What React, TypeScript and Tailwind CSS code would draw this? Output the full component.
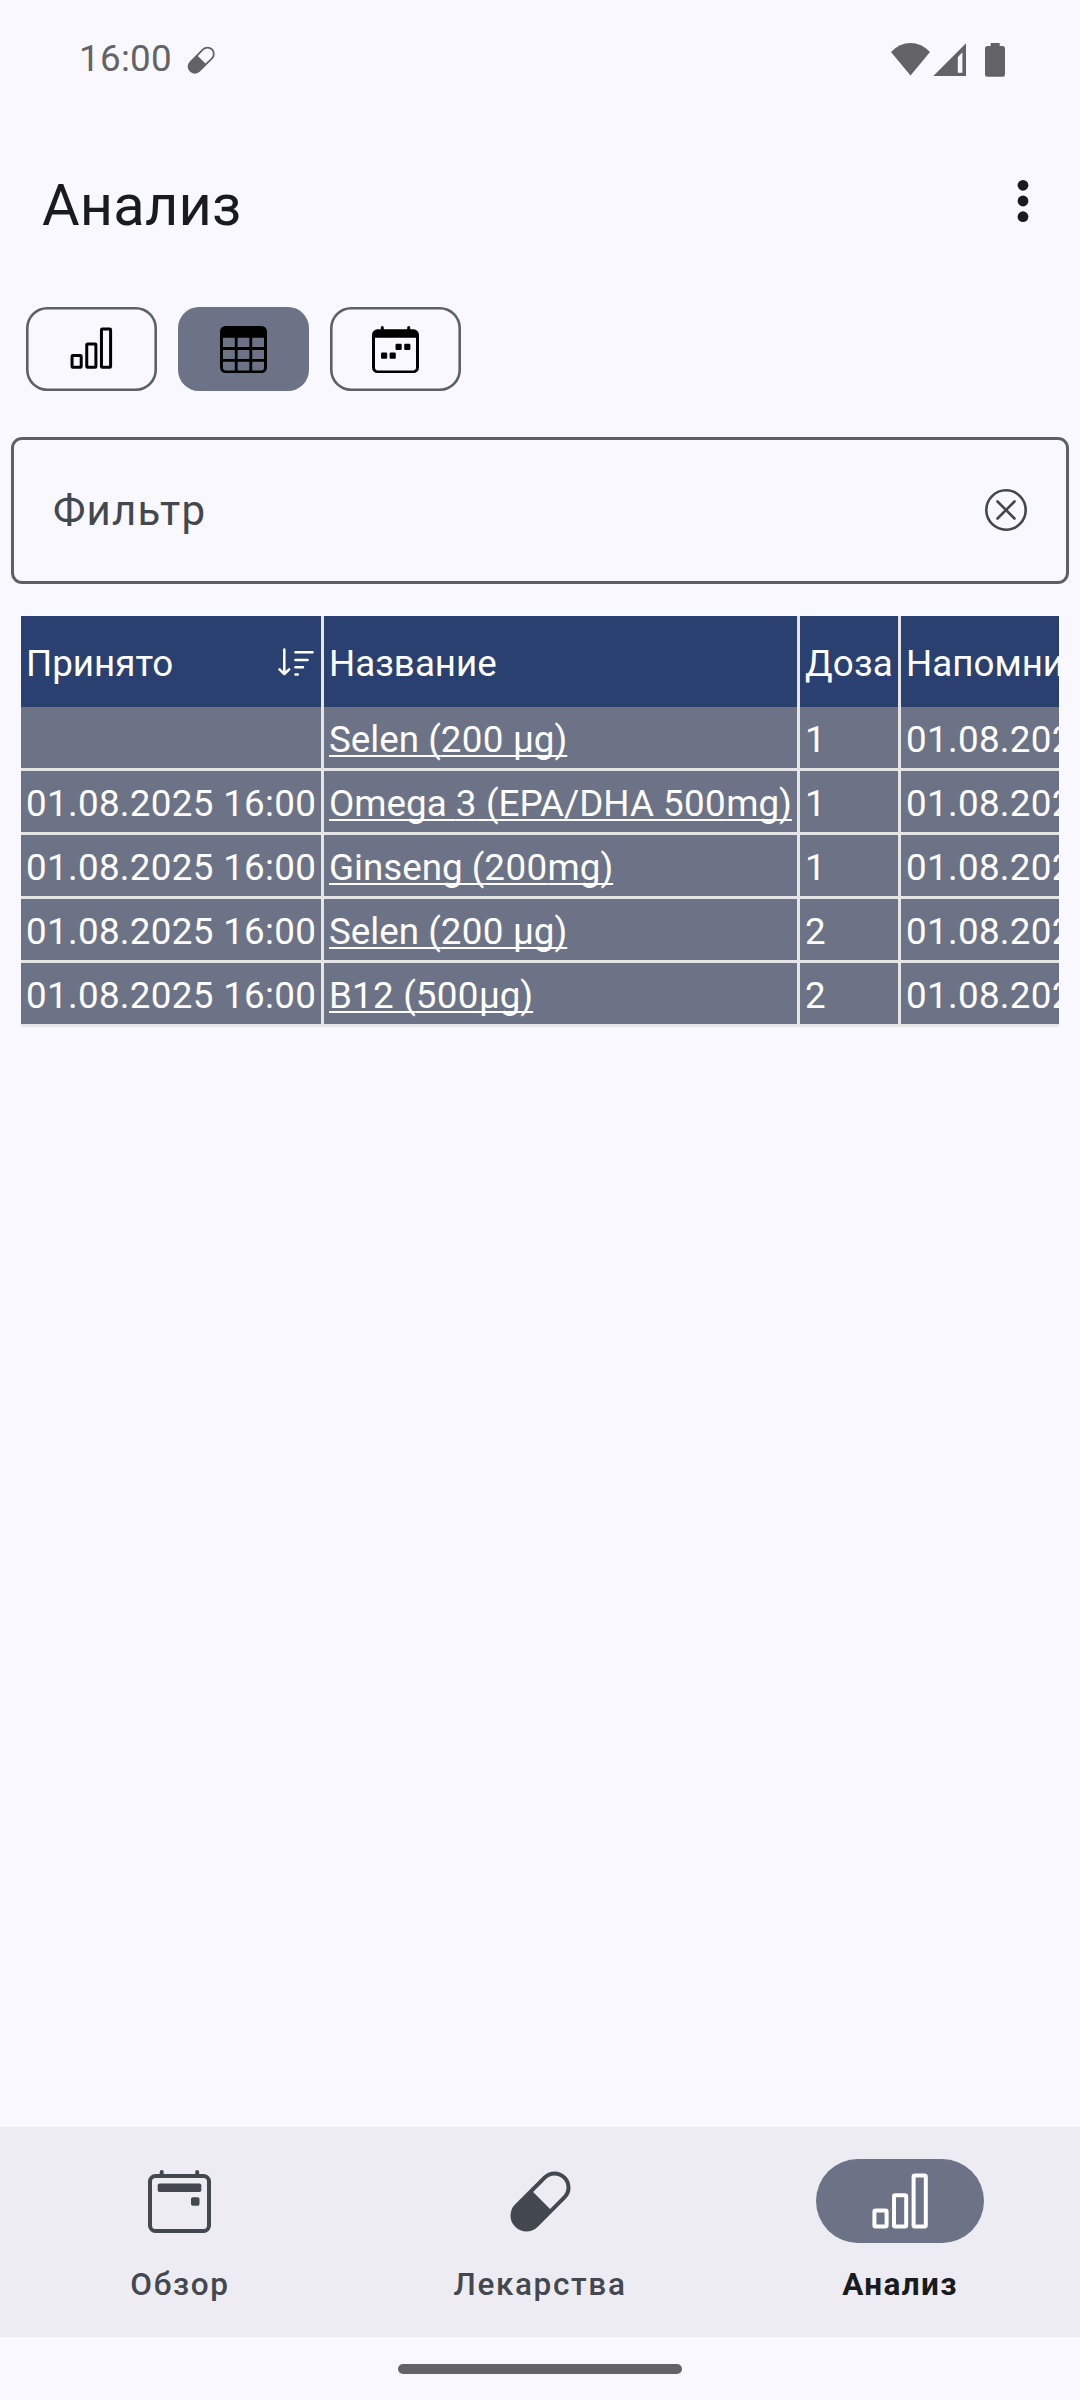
import type { ReactNode } from "react";

function PillIcon({ className }: { className: string }) {
  return (
    <svg viewBox="0 0 63 63" className={className} fill="currentColor">
      <g transform="translate(31.5 31.5) rotate(-45)">
        <path
          fillRule="evenodd"
          d="M-19.8 -16H19.8A16 16 0 0 1 19.8 16H-19.8A16 16 0 0 1 -19.8 -16ZM1.5 -12H19.8A12 12 0 0 1 19.8 12H1.5Z"
        />
      </g>
    </svg>
  );
}

function BarsIcon({ className }: { className: string }) {
  return (
    <svg viewBox="0 0 63 63" className={className} fill="none" stroke="currentColor" strokeWidth="4">
      <rect x="5.4" y="40.6" width="12.2" height="15.8" rx="1.2" />
      <rect x="25" y="25.2" width="12.2" height="31.2" rx="1.2" />
      <rect x="44.6" y="5.4" width="12.2" height="51" rx="1.2" />
    </svg>
  );
}

function TableIcon() {
  return (
    <svg viewBox="0 0 47 47" className="size-[47px]">
      <path
        fillRule="evenodd"
        d="M5.5 0H41.5A5.5 5.5 0 0 1 47 5.5V41.5A5.5 5.5 0 0 1 41.5 47H5.5A5.5 5.5 0 0 1 0 41.5V5.5A5.5 5.5 0 0 1 5.5 0ZM3 11.8V21H14.8V11.8ZM17.6 11.8V21H29.4V11.8ZM32.2 11.8V21H44V11.8ZM3 24V33H14.8V24ZM17.6 24V33H29.4V24ZM32.2 24V33H44V24ZM3 35.8V42Q3 44.4 5.4 44.4H14.8V35.8ZM17.6 35.8V44.4H29.4V35.8ZM32.2 35.8V44.4H41.6Q44 44.4 44 42V35.8Z"
      />
    </svg>
  );
}

function MonthIcon() {
  return (
    <svg viewBox="0 0 47 47" className="size-[47px]">
      <path
        fillRule="evenodd"
        d="M5.5 3.3H41.5A5.5 5.5 0 0 1 47 8.8V41.5A5.5 5.5 0 0 1 41.5 47H5.5A5.5 5.5 0 0 1 0 41.5V8.8A5.5 5.5 0 0 1 5.5 3.3ZM3 11.8V41.6Q3 44.4 5.8 44.4H41.2Q44 44.4 44 41.6V11.8Z"
      />
      <path d="M10.3 1.5V5M36.7 1.5V5" stroke="#000" strokeWidth="3" strokeLinecap="round" />
      <rect x="9" y="26.6" width="6.2" height="6.2" rx="1.2" />
      <rect x="17.6" y="26.6" width="6.2" height="6.2" rx="1.2" />
      <rect x="23.5" y="17.8" width="6.2" height="6.2" rx="1.2" />
      <rect x="32.2" y="17.8" width="6.2" height="6.2" rx="1.2" />
    </svg>
  );
}

function DayIcon() {
  return (
    <svg viewBox="0 0 63 63" className="mr-px size-[63px]" fill="currentColor">
      <rect x="2" y="6" width="59" height="55" rx="5.5" fill="none" stroke="currentColor" strokeWidth="4" />
      <path d="M13.7 2V6M49.2 2V6" stroke="currentColor" strokeWidth="4" strokeLinecap="round" />
      <rect x="9.7" y="13.4" width="43.6" height="8.6" rx="1.8" />
      <rect x="43" y="27.2" width="8.5" height="8.5" rx="1.8" />
    </svg>
  );
}

function SortIcon() {
  return (
    <svg
      viewBox="0 0 38 30"
      className="h-[30px] w-[38px]"
      fill="none"
      stroke="#fff"
      strokeWidth="2.5"
      strokeLinecap="round"
      strokeLinejoin="round"
    >
      <path d="M7.3 2.5V27M2.5 22.3L7.3 27L12.2 22.3M18.4 5.3H35.6M18.4 13H30.6M18.4 20.2H26M18.4 27.4H20.8" />
    </svg>
  );
}

const rows = [
  { taken: "", name: "Selen (200 µg)", dose: "1" },
  { taken: "01.08.2025 16:00", name: "Omega 3 (EPA/DHA 500mg)", dose: "1" },
  { taken: "01.08.2025 16:00", name: "Ginseng (200mg)", dose: "1" },
  { taken: "01.08.2025 16:00", name: "Selen (200 µg)", dose: "2" },
  { taken: "01.08.2025 16:00", name: "B12 (500µg)", dose: "2" },
];

const grid = "grid w-[1300px] grid-cols-[300px_473px_98px_399px] gap-x-[3px]";

function Head({ children }: { children: ReactNode }) {
  return <div className="flex items-center justify-between bg-[#294070] pt-1 pl-[5px]">{children}</div>;
}

function Cell({ children }: { children?: ReactNode }) {
  return <div className="flex items-center bg-[#6d7386] pt-1 pl-[5px] tracking-[0.31px]">{children}</div>;
}

/* Digits are set slightly wider than the letters around them. */
function Name({ text }: { text: string }) {
  return (
    <span className="tracking-normal underline decoration-[2px] underline-offset-[3px] [text-decoration-skip-ink:none]">
      {text.split(/(\d+)/).map((part, i) =>
        /\d/.test(part) ? (
          <span key={i} className="tracking-[0.4px]">
            {part}
          </span>
        ) : (
          part
        ),
      )}
    </span>
  );
}

function NavItem({ icon, label, active = false }: { icon: ReactNode; label: string; active?: boolean }) {
  return (
    <button className="flex flex-1 flex-col items-center pt-8">
      <span
        className={
          active
            ? "flex h-[84px] w-[168px] items-center justify-center rounded-full bg-[#6d7386] text-white"
            : "flex h-[84px] w-[168px] items-center justify-center text-[#43474e]"
        }
      >
        {icon}
      </span>
      <span
        className={
          active
            ? "mt-[23px] text-[31.5px] leading-[37px] font-bold tracking-[1.4px] text-[#1a1b20]"
            : "mt-[23px] text-[31.5px] leading-[37px] font-medium tracking-[1.65px] text-[#43474e]"
        }
      >
        {label}
      </span>
    </button>
  );
}

export default function App() {
  return (
    <div className="flex h-[2400px] w-[1080px] flex-col overflow-hidden bg-[#f9f8ff] font-['Roboto',sans-serif]">
      <header className="flex h-[120px] shrink-0 items-center justify-between pr-[75px] pl-[79px] text-[#636365]">
        <div className="flex items-center">
          <span className="mb-[3px] text-[36.75px] leading-[43px] tracking-[0.3px]">16:00</span>
          <PillIcon className="ml-[15px] size-[28.4px]" />
        </div>
        <svg viewBox="0 0 114 34" className="mb-px h-[34px] w-[114px]" fill="currentColor">
          <path d="M19.5 32.6L0 9Q8.5 0 19.5 0T39 9Z" />
          <path fillRule="evenodd" d="M75 0.3V33H42.3ZM66.8 14.2V29.8H71.4V9.2Z" />
          <path d="M99.7 0H108.7V3H111.5Q114 3 114 5.5V31.2Q114 33.7 111.5 33.7H96.5Q94 33.7 94 31.2V5.5Q94 3 96.5 3H99.7Z" />
        </svg>
      </header>

      <div className="flex h-[168px] shrink-0 items-center justify-between pr-[49.5px] pl-[42px] text-[#1a1b20]">
        <h1 className="pt-0.5 text-[57.75px] leading-[68px] tracking-[0.2px]">Анализ</h1>
        <svg viewBox="0 0 16 44" className="mb-1.5 h-11 w-4" fill="currentColor">
          <circle cx="8" cy="6.3" r="5.4" />
          <circle cx="8" cy="22" r="5.4" />
          <circle cx="8" cy="37.7" r="5.4" />
        </svg>
      </div>

      <div className="mt-[19px] ml-[26px] flex gap-[21px]">
        <button className="flex h-[84px] w-[131px] items-center justify-center rounded-[21px] text-black shadow-[inset_0_0_0_2.6px_#5d6166]">
          <BarsIcon className="size-[47.25px]" />
        </button>
        <button className="flex h-[84px] w-[131px] items-center justify-center rounded-[21px] bg-[#6d7386]">
          <TableIcon />
        </button>
        <button className="flex h-[84px] w-[131px] items-center justify-center rounded-[21px] shadow-[inset_0_0_0_2.6px_#5d6166]">
          <MonthIcon />
        </button>
      </div>

      <div className="mx-[11px] mt-[46px] flex h-[147px] shrink-0 items-center justify-between rounded-[11px] border-3 border-[#5d6166] pr-[38px] pl-[39px] text-[#43474e]">
        <span className="text-[42px] leading-[50px] tracking-[1.2px]">Фильтр</span>
        <svg
          viewBox="0 0 44 44"
          className="mb-px size-11"
          fill="none"
          stroke="currentColor"
          strokeWidth="2.6"
          strokeLinecap="round"
        >
          <circle cx="22" cy="22" r="19.7" />
          <path d="M13.5 13.5L30.5 30.5M30.5 13.5L13.5 30.5" />
        </svg>
      </div>

      <div className="mx-[21px] mt-8 shrink-0 overflow-hidden bg-[#e6e6e6] text-[36.75px] leading-[43px] whitespace-nowrap text-white">
        <div className={`${grid} h-[91px]`}>
          <Head>
            Принято
            <span className="-mt-1 mr-[6px]">
              <SortIcon />
            </span>
          </Head>
          <Head>Название</Head>
          <Head>
            <span className="tracking-[0.2px]">Доза</span>
          </Head>
          <Head>Напомнить</Head>
        </div>
        {rows.map((row, i) => (
          <div key={i} className={`${grid} mb-[3px] h-[61px]`}>
            <Cell>{row.taken}</Cell>
            <Cell>
              <Name text={row.name} />
            </Cell>
            <Cell>{row.dose}</Cell>
            <Cell>01.08.2025 16:00</Cell>
          </div>
        ))}
      </div>

      <nav className="mt-auto flex h-[210px] shrink-0 bg-[#edecf3]">
        <NavItem icon={<DayIcon />} label="Обзор" />
        <NavItem icon={<PillIcon className="size-[63px]" />} label="Лекарства" />
        <NavItem icon={<BarsIcon className="size-[63px]" />} label="Анализ" active />
      </nav>
      <div className="flex h-[63px] shrink-0 justify-center pt-[27px]">
        <div className="h-[10px] w-[284px] rounded-full bg-[#636365]" />
      </div>
    </div>
  );
}
